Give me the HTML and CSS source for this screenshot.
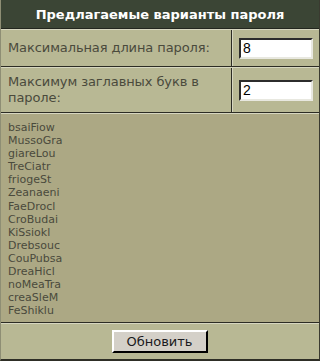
FILE: index.html
```html
<!DOCTYPE html>
<html lang="ru">
<head>
<meta charset="utf-8">
<title>Предлагаемые варианты пароля</title>
<link rel="stylesheet" href="styles.css">
</head>
<body>
<div class="panel">
  <div class="header">Предлагаемые варианты пароля</div>
  <div class="row row-1">
    <div class="label">Максимальная длина пароля:</div>
    <div class="field"><input class="input" type="text" value="8"></div>
  </div>
  <div class="row row-2">
    <div class="label">Максимум заглавных букв в пароле:</div>
    <div class="field"><input class="input" type="text" value="2"></div>
  </div>
  <div class="list">
    <div>bsaiFiow</div>
    <div>MussoGra</div>
    <div>giareLou</div>
    <div>TreCiatr</div>
    <div>friogeSt</div>
    <div>Zeanaeni</div>
    <div>FaeDrocl</div>
    <div>CroBudai</div>
    <div>KiSsiokl</div>
    <div>Drebsouc</div>
    <div>CouPubsa</div>
    <div>DreaHicl</div>
    <div>noMeaTra</div>
    <div>creaSleM</div>
    <div>FeShiklu</div>
  </div>
  <div class="footer"><button class="btn" type="button">Обновить</button></div>
</div>
</body>
</html>
```

FILE: styles.css
```css
html, body {
  margin: 0;
  padding: 0;
  background: #b8b894;
}
.panel {
  width: 320px;
  height: 361px;
  box-sizing: border-box;
  background: #b8b894;
  border-left: 1px solid #8e8e74;
  border-right: 1px solid #3a3a30;
  border-bottom: 2px solid #2e2e26;
  font-family: "DejaVu Sans", Verdana, sans-serif;
  color: #4a4a3c;
  display: flex;
  flex-direction: column;
}
.header {
  height: 29px;
  box-sizing: border-box;
  background: #3b4535;
  color: #ffffff;
  font-weight: bold;
  font-size: 13px;
  display: flex;
  align-items: center;
  justify-content: center;
  border-bottom: 1px solid #22261e;
}
.row {
  display: flex;
  border-top: 1px solid #d6d6c0;
  border-bottom: 1px solid #2c2c24;
  font-size: 13px;
}
.row-1 { height: 38px; box-sizing: border-box; }
.row-2 { height: 46px; box-sizing: border-box; }
.label {
  width: 223px;
  padding: 0 0 0 7px;
  border-right: 1px solid #2c2c24;
  display: flex;
  align-items: center;
  line-height: 16px;
  letter-spacing: -0.1px;
}
.field {
  flex: 1;
  display: flex;
  align-items: center;
  padding-left: 6px;
  border-left: 1px solid #d6d6c0;
}
.input {
  width: 74px;
  height: 21px;
  box-sizing: border-box;
  margin: 0;
  padding: 1px 2px;
  font-family: "Liberation Sans", Arial, sans-serif;
  font-size: 14px;
  color: #000;
  background: #fff;
  border: 2px inset #d4d0c8;
  border-top-color: #808080;
  border-left-color: #808080;
  border-right-color: #e8e8e0;
  border-bottom-color: #e8e8e0;
}
.list {
  flex: 1;
  background: #aca884;
  border-top: 1px solid #d6d6c0;
  border-bottom: 1px solid #2c2c24;
  padding: 7px 7px 0;
  font-size: 11px;
  line-height: 13.1px;
  color: #4a4a3c;
}
.footer {
  height: 36px;
  box-sizing: border-box;
  border-top: 1px solid #d6d6c0;
  display: flex;
  align-items: center;
  justify-content: center;
  padding-right: 1px;
}
.btn {
  width: 96px;
  height: 23px;
  box-sizing: border-box;
  background: #d4d0c8;
  border: 2px outset #d4d0c8;
  border-top-color: #ffffff;
  border-left-color: #ffffff;
  border-right-color: #404040;
  border-bottom-color: #404040;
  font-family: "DejaVu Sans", Verdana, sans-serif;
  font-size: 13px;
  color: #1a1a20;
  padding: 0;
  margin-top: -1px;
}
```
